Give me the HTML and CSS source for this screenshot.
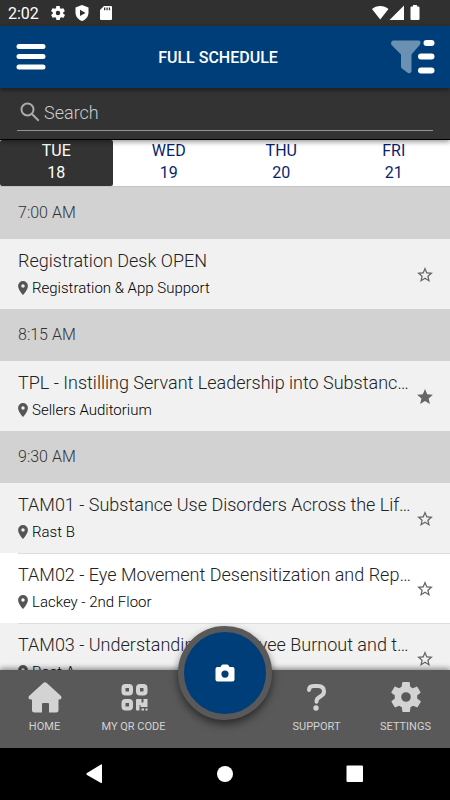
FILE: index.html
```html
<!DOCTYPE html>
<html lang="en">
<head>
<meta charset="utf-8">
<meta name="viewport" content="width=device-width, initial-scale=1">
<title>Full Schedule</title>
<link rel="stylesheet" href="styles.css">
</head>
<body>
<svg class="symbols" aria-hidden="true">
  <symbol id="gear" viewBox="2 2 20 20"><path d="M19.4 13c.1-.3.1-.7.1-1s0-.7-.1-1l2.1-1.600c.2-.2.3-.4.1-.7l-2-3.400c-.1-.2-.4-.3-.6-.2l-2.500 1c-.5-.4-1.100-.7-1.700-1L14.500 2.400c0-.2-.2-.4-.5-.4h-4c-.3 0-.5.2-.5.4l-.4 2.700c-.6.2-1.200.6-1.700 1l-2.500-1c-.2-.1-.5 0-.6.2l-2 3.400c-.1.200-.1.500.1.700L4.600 11c-.1.300-.1.700-.1 1s0 .7.100 1l-2.100 1.600c-.2.200-.3.400-.1.700l2 3.400c.1.200.4.300.6.200l2.500-1c.5.400 1.100.7 1.700 1l.4 2.700c0 .200.2.400.5.400h4c.3 0 .5-.2.5-.4l.4-2.700c.6-.2 1.200-.6 1.700-1l2.500 1c.2.100.5 0 .6-.2l2-3.400c.1-.2.1-.5-.1-.7zM12 15.200a3.200 3.200 0 1 1 0-6.400 3.200 3.200 0 0 1 0 6.400z"/></symbol>
  <symbol id="pin" viewBox="5 2 14 20"><path d="M12 2a7 7 0 0 0-7 7c0 5.200 7 13 7 13s7-7.800 7-13a7 7 0 0 0-7-7zm0 9.500a2.500 2.500 0 1 1 0-5 2.500 2.500 0 0 1 0 5z"/></symbol>
  <symbol id="star-outline" viewBox="2 2 20 19"><path d="M22 9.200l-7.200-.6L12 2 9.200 8.600 2 9.200l5.500 4.700L5.800 21 12 17.300l6.200 3.700-1.600-7.100zM12 15.400l-3.800 2.300 1-4.300-3.300-2.900 4.400-.4L12 6.100l1.700 4 4.400.4-3.300 2.900 1 4.300z"/></symbol>
  <symbol id="star" viewBox="2 2 20 19"><path d="M12 17.300l6.200 3.700-1.600-7.100L22 9.200l-7.200-.6L12 2 9.200 8.600 2 9.200l5.500 4.700L5.800 21z"/></symbol>
</svg>
<div class="app">
  <div class="status">
    <span class="clock">2:02</span>
    <svg class="status-icon" aria-hidden="true"><use href="#gear"/></svg>
    <svg class="status-icon" viewBox="0 0 14 16" aria-hidden="true"><path d="M7 0l6.500 2.500v5c0 4-2.700 7.300-6.500 8.500C3.200 14.800.5 11.500.5 7.500v-5z"/><path class="cut" d="M5 4.700l5.500 3.200L5 11z"/></svg>
    <svg class="status-icon" viewBox="0 0 14 16" aria-hidden="true"><path d="M5 1h7a1 1 0 0 1 1 1v12a1 1 0 0 1-1 1H2a1 1 0 0 1-1-1V5z"/><path class="cut" d="M5 2.500h1.300v2.800H5zm2.400 0h1.300v2.800H7.400zm2.400 0h1.300v2.800H9.800z"/></svg>
    <svg class="radio-icons" viewBox="0 0 50 16" aria-hidden="true"><path d="M0 4c4.500-4 12-4 16.500 0L8.200 14.500zM32 .5V15H17.500zM39.500 1.500h1.500V0h4v1.500h1.500a1 1 0 0 1 1 1V14a1 1 0 0 1-1 1h-7a1 1 0 0 1-1-1V2.500a1 1 0 0 1 1-1z"/></svg>
  </div>
  <header class="header">
    <button class="icon-button" aria-label="Menu"><svg class="menu-icon" viewBox="0 0 30 28"><path d="M3 3.500h24M3 13.500h24M3 24h24"/></svg></button>
    <h1 class="title">FULL SCHEDULE</h1>
    <button class="icon-button" aria-label="Filter"><svg class="filter-icon" viewBox="0 0 46 36"><path class="funnel" d="M3 1.500h26q2.500 1.500 1 4l-8.500 10v17q-1 2.500-3.500 1.500l-6-4.500q-1-1-1-2V15.500L1.500 6q-1.500-3 1.500-4.500z"/><path class="bars" d="M36.500 4h5M31 17.500h10.500M31 31.500h10.500"/></svg></button>
  </header>
  <div class="search">
    <label class="search-field">
      <svg class="search-icon" viewBox="0 0 20 20" aria-hidden="true"><circle cx="7.500" cy="7.500" r="6"/><path d="M12 12l6.700 6.700"/></svg>
      <input type="text" placeholder="Search" aria-label="Search">
    </label>
  </div>
  <nav class="days" aria-label="Days">
    <button class="day selected"><span>TUE</span><span>18</span></button>
    <button class="day"><span>WED</span><span>19</span></button>
    <button class="day"><span>THU</span><span>20</span></button>
    <button class="day"><span>FRI</span><span>21</span></button>
  </nav>
  <main class="schedule">
    <section>
      <h2 class="time">7:00 AM</h2>
      <article class="event">
        <div class="details"><h3>Registration Desk OPEN</h3><p><svg class="pin" aria-hidden="true"><use href="#pin"/></svg>Registration &amp; App Support</p></div>
        <button class="favorite" aria-label="Add favorite"><svg><use href="#star-outline"/></svg></button>
      </article>
    </section>
    <section>
      <h2 class="time">8:15 AM</h2>
      <article class="event">
        <div class="details"><h3>TPL - Instilling Servant Leadership into Substance Use Services</h3><p><svg class="pin" aria-hidden="true"><use href="#pin"/></svg>Sellers Auditorium</p></div>
        <button class="favorite" aria-label="Remove favorite"><svg><use href="#star"/></svg></button>
      </article>
    </section>
    <section>
      <h2 class="time">9:30 AM</h2>
      <article class="event">
        <div class="details"><h3>TAM01 - Substance Use Disorders Across the Lifespan</h3><p><svg class="pin" aria-hidden="true"><use href="#pin"/></svg>Rast B</p></div>
        <button class="favorite" aria-label="Add favorite"><svg><use href="#star-outline"/></svg></button>
      </article>
      <article class="event">
        <div class="details"><h3>TAM02 - Eye Movement Desensitization and Reprocessing</h3><p><svg class="pin" aria-hidden="true"><use href="#pin"/></svg>Lackey - 2nd Floor</p></div>
        <button class="favorite" aria-label="Add favorite"><svg><use href="#star-outline"/></svg></button>
      </article>
      <article class="event">
        <div class="details"><h3>TAM03 - Understanding Employee Burnout and the Workplace</h3><p><svg class="pin" aria-hidden="true"><use href="#pin"/></svg>Rast A</p></div>
        <button class="favorite" aria-label="Add favorite"><svg><use href="#star-outline"/></svg></button>
      </article>
    </section>
  </main>
  <nav class="tabs" aria-label="Main">
    <a class="tab" href="#home"><svg viewBox="0 0 34 32"><path d="M15 1.300q2-2 4 0L33 14q1.500 3-1.500 3.500h-1V28q0 2.500-2.500 2.500H21V22q0-1-1-1h-5q-1 0-1 1v8.500H6.500Q4 30.500 4 28V17.500H2.500Q-.500 17 1 14z"/></svg>HOME</a>
    <a class="tab" href="#code"><svg viewBox="0 0 34 32"><g class="stroke"><rect x="6.500" y="4" width="7.500" height="7.500" rx="2"/><rect x="21" y="4" width="7.500" height="7.500" rx="2"/><rect x="6.500" y="19" width="7.500" height="7.500" rx="2"/></g><path d="M20.500 17h4v3.500h2V17h4v8h-7v-2h-1v5.500h-2.500q-1 0-1-1V18q0-1 1-1zM24.500 26.500H27v2h-2.500zm4 0h2v2h-2z"/></svg>MY QR CODE</a>
    <div class="camera-slot"><button class="camera" aria-label="Camera"><svg viewBox="0 0 20 18"><path fill-rule="evenodd" d="M6.500 1.300Q7 .5 8 .5h4q1 0 1.500.8L14.500 3H17.500q2 0 2 2v10.500q0 2-2 2h-15q-2 0-2-2V5q0-2 2-2H5.500zM10 6.500a3.600 3.600 0 1 0 0 7.200 3.600 3.600 0 0 0 0-7.200z"/></svg></button></div>
    <a class="tab" href="#support"><svg viewBox="0 0 34 32"><path class="question" d="M9 8q0-4 4.500-4h4.500q6 0 6 5.500 0 3-3 4.500l-2.500 1.700q-2 1.200-2 4"/><circle cx="16" cy="26" r="2.700"/></svg>SUPPORT</a>
    <a class="tab" href="#settings"><svg viewBox="0 0 34 32"><use href="#gear" x="2" y="0" width="30" height="30"/></svg>SETTINGS</a>
  </nav>
  <div class="system">
    <button aria-label="Back"><svg viewBox="0 0 20 20"><path d="M17 1v17q0 1.500-1 1L2 11q-1.500-1 0-2L16 .5q1-.5 1 .5z"/></svg></button>
    <button aria-label="Home"><svg viewBox="0 0 20 20"><circle cx="10" cy="10" r="8"/></svg></button>
    <button aria-label="Recent apps"><svg viewBox="0 0 20 20"><rect x="1.500" y="1.500" width="16.500" height="16.500" rx="1"/></svg></button>
  </div>
</div>
</body>
</html>
```
FILE: styles.css
```css
* { box-sizing: border-box; }
body { margin: 0; font-family: Roboto, "Liberation Sans", sans-serif; color: #222; }
h1, h2, h3, p { margin: 0; font-weight: 400; }
button { margin: 0; padding: 0; border: 0; background: none; font: inherit; color: inherit; }
svg { display: block; fill: currentColor; flex: none; }
.symbols { position: absolute; width: 0; height: 0; }

.app { display: flex; flex-direction: column; height: 100vh; background: #fff; }

.status { display: flex; align-items: center; flex: none; height: 26px; padding: 0 28px 0 8px; background: #303030; color: #fff; }
.clock { width: 43px; font-size: 16px; }
.status-icon { width: 14px; height: 16px; margin-right: 10px; }
.cut { fill: #303030; }
.radio-icons { width: 50px; height: 16px; margin-left: auto; }

.header { display: flex; align-items: center; justify-content: space-between; flex: none; height: 62px; padding: 0 14px 0 16px; background: #003e79; color: #fff; box-shadow: 0 2px 5px #0007; z-index: 2; }
.title { font-size: 16px; font-weight: 500; }
.icon-button { display: flex; }
.menu-icon { width: 30px; height: 28px; fill: none; stroke: #fff; stroke-width: 5; stroke-linecap: round; }
.filter-icon { width: 46px; height: 36px; }
.funnel { fill: #6a91b2; }
.bars { fill: none; stroke: #fff; stroke-width: 6; stroke-linecap: round; }

.search { flex: none; height: 52px; padding: 8px 17px; background: #333; border-bottom: 1px solid #000; box-shadow: 0 2px 5px #0006; z-index: 1; }
.search-field { display: flex; align-items: center; gap: 4px; height: 35px; padding: 0 0 2px 3px; border-bottom: 1px solid #909493; color: #aaa; }
.search-icon { width: 20px; height: 20px; fill: none; stroke: currentColor; stroke-width: 2; }
.search input { flex: 1; min-width: 0; padding: 0; border: 0; outline: 0; background: none; font: 300 18px Roboto, sans-serif; color: #fff; }
.search input::placeholder { color: #ccc; opacity: 1; }

.days { display: grid; grid-template-columns: repeat(4, 1fr); flex: none; height: 46px; }
.day { display: flex; flex-direction: column; align-items: center; border-radius: 2px; font-size: 16px; line-height: 22px; color: #061f70; }
.day.selected { background: #333; color: #fff; }

.schedule { flex: 1; min-height: 0; overflow: hidden; border-top: 1px solid #c4c4c4; }
.time { height: 52px; padding-left: 18px; background: #d2d2d2; font-size: 16px; font-weight: 300; line-height: 51px; color: #333; }
.event { display: flex; align-items: center; height: 70px; padding-right: 17px; background: #f1f1f1; }
.event:nth-of-type(even) { background: #fff; }
.details { flex: 1; min-width: 0; height: 70px; margin-left: 18px; padding: 9px 3px 0 0; }
.event + .event { background-image: linear-gradient(#ddd, #ddd); background-repeat: no-repeat; background-size: 100% 1px; background-position: 18px 0; }
.details h3 { overflow: hidden; text-overflow: ellipsis; white-space: nowrap; font-size: 18px; font-weight: 300; line-height: 25px; }
.details p { display: flex; align-items: center; gap: 4px; margin-top: 4px; font-size: 15px; font-weight: 300; line-height: 22px; color: #000; }
.pin { width: 10px; height: 14px; color: #555; }
.favorite { color: #666; }
.favorite svg { width: 16px; height: 15px; }

.tabs { display: grid; grid-template-columns: repeat(5, 1fr); flex: none; height: 78px; background: #595959; color: #d3d3d3; box-shadow: 0 -2px 5px #0006; z-index: 1; }
.tab { display: flex; flex-direction: column; align-items: center; gap: 5px; padding-top: 12px; font-size: 11px; line-height: 16px; color: inherit; text-decoration: none; white-space: nowrap; }
.tab svg { width: 34px; height: 32px; }
.stroke { fill: none; stroke: currentColor; stroke-width: 4; }
.question { fill: none; stroke: currentColor; stroke-width: 4; stroke-linecap: round; }
.camera-slot { display: flex; justify-content: center; }
.camera { display: flex; align-items: center; justify-content: center; width: 94px; height: 94px; flex: none; margin-top: -44px; border: 6px solid #595959; border-radius: 50%; background: #003e79; color: #fff; box-shadow: 0 4px 8px #0008; }
.camera svg { width: 20px; height: 18px; }

.system { display: flex; align-items: center; justify-content: center; gap: 110px; flex: none; height: 52px; background: #000; color: #fff; z-index: 2; }
.system svg { width: 20px; height: 20px; }
```
